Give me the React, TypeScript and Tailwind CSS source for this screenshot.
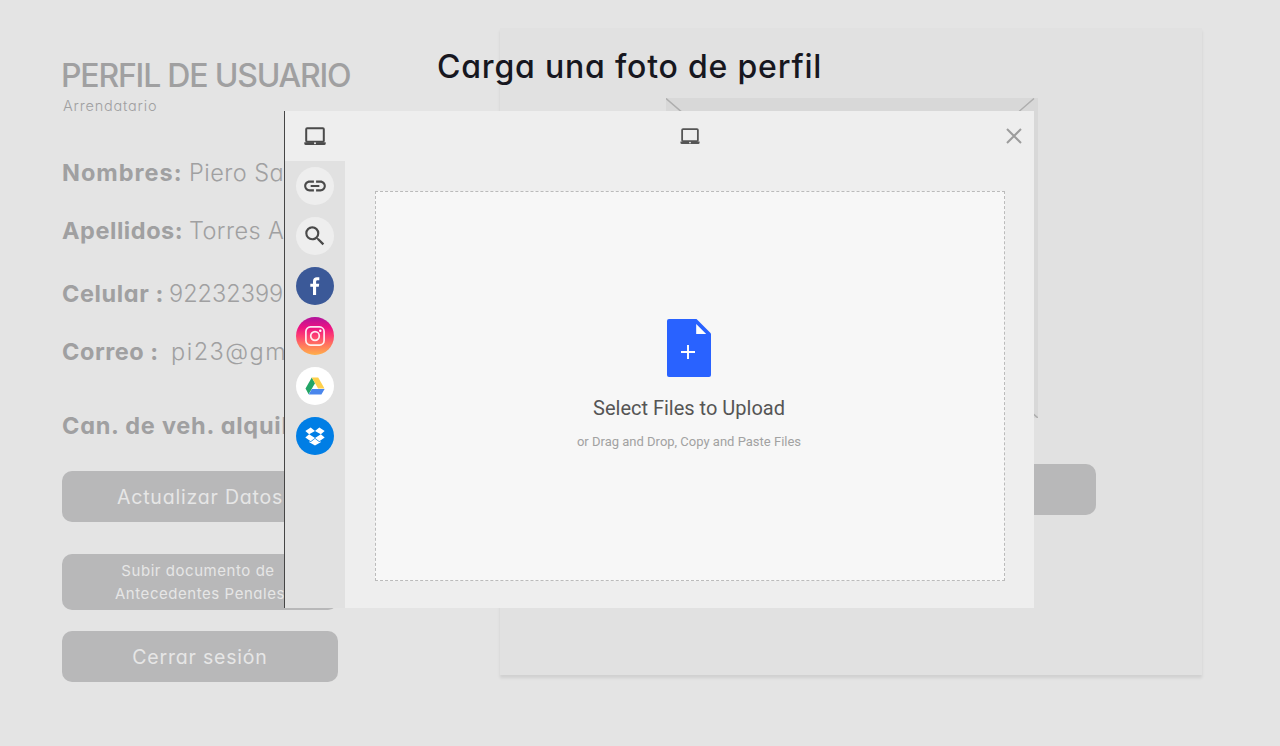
import React from "react";

const pageFont = "font-['Inter','Liberation_Sans',sans-serif] [font-feature-settings:'cv11'_1,'ss03'_1]";

function Laptop({ className, color }: { className: string; color: string }) {
  return (
    <svg viewBox="0 0 22 19" className={className} fill="none">
      <rect x="2.2" y="1.3" width="17.6" height="13.4" rx="1" stroke={color} strokeWidth="2" />
      <path d="M0.3 15.2h21.4v1.3a1.5 1.5 0 0 1-1.5 1.5H1.8a1.5 1.500 0 0 1-1.500-1.500z" fill={color} />
      <circle cx="11" cy="16.3" r="1" fill="#eee" />
    </svg>
  );
}

function Field({ label, value, labelClass, valueClass = "" }: { label: string; value?: string; labelClass: string; valueClass?: string }) {
  return (
    <div className="flex h-[30px] text-[23.5px] leading-[30px] whitespace-nowrap">
      <span className={`shrink-0 font-bold ${labelClass}`}>{label}</span>
      {value && <span className={`font-light ${valueClass}`}>{value}</span>}
    </div>
  );
}

function Source({ className, children }: { className: string; children: React.ReactNode }) {
  return (
    <li className="flex h-[50px] items-center justify-center">
      <button className={`flex size-[38px] items-center justify-center rounded-full ${className}`}>{children}</button>
    </li>
  );
}

export default function App() {
  return (
    <div className={`relative h-[746px] w-[1280px] overflow-hidden bg-[#e4e4e4] ${pageFont}`}>
      <div className="flex pt-[28px] pl-[62px] text-[#a0a0a1]">
        <div className="w-[276px] shrink-0 pt-[32px]">
          <h1 className="-ml-px text-[32px] leading-[32px] font-medium tracking-[-1.2px] whitespace-nowrap">PERFIL DE USUARIO</h1>
          <p className="mt-[4px] pl-px text-[14.5px] leading-[20px] font-light tracking-[0.8px]">Arrendatario</p>
          <div className="mt-[42px]"><Field label="Nombres:" value="Piero Sa" labelClass="w-[127px] tracking-[1px]" valueClass="tracking-[0.45px]" /></div>
          <div className="mt-[28px]"><Field label="Apellidos:" value="Torres A" labelClass="w-[127px] tracking-[0.55px]" valueClass="tracking-[0.4px]" /></div>
          <div className="mt-[33px]"><Field label="Celular :" value="92232399" labelClass="w-[107px] tracking-[0.6px]" /></div>
          <div className="mt-[28px]"><Field label="Correo :" value="pi23@gm" labelClass="w-[109px] tracking-[0.55px]" valueClass="tracking-[1.5px]" /></div>
          <div className="mt-[44px]"><Field label="Can. de veh. alquil" labelClass="tracking-[0.75px]" /></div>
          <button className="mt-[30px] flex h-[51px] w-full items-center justify-center rounded-[10px] bg-[#b8b8b9] pt-[2px] text-[19.5px] tracking-[0.8px] text-[#e6e6e6]">Actualizar Datos</button>
          <button className="mt-[32px] flex h-[56px] w-full items-center justify-center rounded-[10px] bg-[#b8b8b9] text-[15px] leading-[23px] tracking-[0.55px] text-[#e6e6e6]">
            <span><span className="block pr-[4px]">Subir documento de</span>Antecedentes Penales</span>
          </button>
          <button className="mt-[21px] flex h-[51px] w-full items-center justify-center rounded-[10px] bg-[#b8b8b9] pt-[2px] text-[19.5px] tracking-[0.8px] text-[#e6e6e6]">Cerrar sesión</button>
        </div>
        <div className="ml-[162px] h-[647px] w-[702px] bg-[#e1e1e1] pt-[70px] shadow-[0_3px_3px_rgba(0,0,0,0.09)]">
          <svg viewBox="0 0 372 320" className="ml-[166px] h-[320px] w-[372px] bg-[#d8d8d8]" stroke="#aeaeae" strokeWidth="1.5">
            <path d="M0 0.5L372 320M368 0.5L0 320" />
          </svg>
          <div className="mt-[46px] ml-[320px] h-[51px] w-[276px] rounded-[10px] bg-[#b8b8b9]" />
        </div>
      </div>

      <div className="absolute top-[47px] left-[437px] text-[32px] leading-[40px] font-medium tracking-[0.8px] whitespace-nowrap text-[#17171f]">Carga una foto de perfil</div>

      <div className="absolute top-[111px] left-[284px] flex h-[497px] w-[750px] border-l border-[#454545] bg-[#eee] font-['Roboto',sans-serif]">
        <aside className="w-[60px] shrink-0">
          <div className="flex h-[50px] items-center justify-center"><Laptop className="h-[19px] w-[22px]" color="#4a4a4a" /></div>
          <ul className="h-[447px] bg-[#e1e1e1]">
            <Source className="bg-[#eee]">
              <svg viewBox="0 0 24 24" className="size-[26px]" fill="#4a4a4a"><path d="M3.9 12c0-1.71 1.39-3.1 3.1-3.1h4V7H7c-2.76 0-5 2.24-5 5s2.24 5 5 5h4v-1.9H7c-1.71 0-3.1-1.39-3.1-3.1zM8 13h8v-2H8v2zm9-6h-4v1.9h4c1.71 0 3.1 1.39 3.1 3.1s-1.39 3.1-3.1 3.1h-4V17h4c2.76 0 5-2.24 5-5s-2.24-5-5-5z" /></svg>
            </Source>
            <Source className="bg-[#eee]">
              <svg viewBox="0 0 24 24" className="size-[26px]" fill="#4a4a4a"><path d="M15.5 14h-.79l-.28-.27A6.471 6.471 0 0 0 16 9.5 6.5 6.5 0 1 0 9.5 16c1.61 0 3.09-.59 4.23-1.57l.27.28v.79l5 4.99L20.49 19l-4.99-5zm-6 0C7.01 14 5 11.99 5 9.5S7.01 5 9.5 5 14 7.01 14 9.5 11.99 14 9.5 14z" /></svg>
            </Source>
            <Source className="bg-[#3b5998] pr-px">
              <svg viewBox="0 0 10 18" className="h-[18px] w-[10px]" fill="#fff"><path d="M3 18V9.800H0.300V6.700H3V4.200C3 1.600 4.500 0.200 6.900 0.200c1.100 0 2.100.1 2.400.1v2.900H7.600C6.400 3.200 6.100 3.800 6.100 4.700v2h3.100l-.4 3.100H6.100V18z" /></svg>
            </Source>
            <Source className="bg-[linear-gradient(to_bottom,#b0149c_0%,#ec1282_28%,#fd3f72_50%,#ff7a5c_75%,#ffb04a_100%)]">
              <svg viewBox="0 0 20 20" className="size-[20px]" fill="none" stroke="#fff" strokeOpacity="0.9" strokeWidth="1.7"><rect x="0.9" y="0.9" width="18.2" height="18.2" rx="4.6" /><circle cx="10" cy="10" r="4.3" /><circle cx="15.3" cy="4.7" r="1.2" fill="#fff" stroke="none" /></svg>
            </Source>
            <Source className="bg-white">
              <svg viewBox="0 0 20 18" className="h-[18px] w-[20px]"><path d="M6.8 0.5L0.5 11.5L3.6 17.3L10 6.2z" fill="#23a566" /><path d="M6.8 0.5H13.2L19.5 11.4H13.1z" fill="#ffd04b" /><path d="M6.9 11.9H19.6L16.4 17.4H3.7z" fill="#4a86ec" /></svg>
            </Source>
            <Source className="bg-[#007ee5]">
              <svg viewBox="0 0 24 22" className="h-[19px] w-[22px]" fill="#fff"><path d="M7 0.5L12 4.5L5.2 8.5L0.8 4.7zM17 0.5L23.2 4.7L18.8 8.5L12 4.5zM0.8 12.3L5.2 8.5L12 12.6L7 16.4zM18.8 8.5L23.2 12.3L17 16.4L12 12.6zM12 13.7L16.9 17.5L18.6 16.5V17.7L12 21.5L5.4 17.7V16.5L7.1 17.5z" /></svg>
            </Source>
          </ul>
        </aside>
        <div className="flex-1 pr-[29px] pl-[30px]">
          <div className="relative flex h-[50px] items-center justify-center">
            <Laptop className="h-[17px] w-[20px]" color="#555" />
            <svg viewBox="0 0 16 16" className="absolute top-[17px] right-[-17px] size-[16px]" stroke="#9c9c9c" strokeWidth="2"><path d="M1 1L15 15M15 1L1 15" /></svg>
          </div>
          <div className="mt-[30px] flex h-[390px] flex-col items-center border border-dashed border-[#bbb] bg-[#f7f7f7] pt-[127px] pr-[2px]">
            <svg viewBox="0 0 44 58" className="h-[58px] w-[44px]"><path d="M2 0H29.5L44 14.5V56a2 2 0 0 1-2 2H2a2 2 0 0 1-2-2V2a2 2 0 0 1 2-2z" fill="#2962ff" /><path d="M29.2 5V15H39.2z" fill="#fff" /><path d="M14 33H28M21 26V40" stroke="#fff" strokeWidth="1.9" /></svg>
            <div className="mt-[19px] text-[20px] leading-[24px] whitespace-nowrap text-[#555]">Select Files to Upload</div>
            <div className="mt-[13px] text-[13px] leading-[18px] whitespace-nowrap text-[#a2a2a2]">or Drag and Drop, Copy and Paste Files</div>
          </div>
        </div>
      </div>
    </div>
  );
}
